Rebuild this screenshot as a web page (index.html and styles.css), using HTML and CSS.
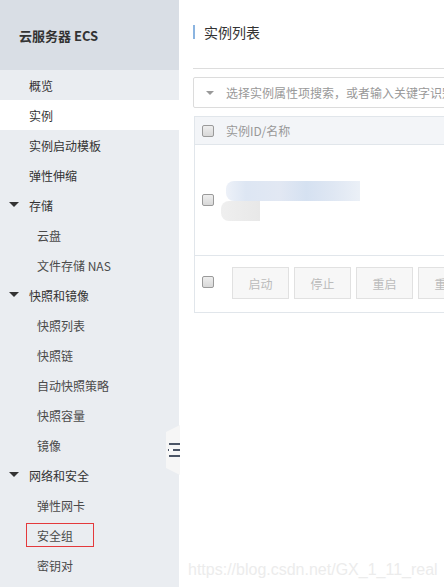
FILE: index.html
```html
<!DOCTYPE html>
<html lang="zh-CN">
<head>
<meta charset="utf-8">
<title>云服务器 ECS</title>
<link rel="stylesheet" href="styles.css">
</head>
<body>
<div class="app">
  <aside class="sidebar">
    <div class="side-head">云服务器 ECS</div>
    <ul class="menu">
      <li class="item">概览</li>
      <li class="item active">实例</li>
      <li class="item">实例启动模板</li>
      <li class="item">弹性伸缩</li>
      <li class="item group"><span class="caret"></span>存储</li>
      <li class="item sub">云盘</li>
      <li class="item sub">文件存储 NAS</li>
      <li class="item group"><span class="caret"></span>快照和镜像</li>
      <li class="item sub">快照列表</li>
      <li class="item sub">快照链</li>
      <li class="item sub">自动快照策略</li>
      <li class="item sub">快照容量</li>
      <li class="item sub">镜像</li>
      <li class="item group"><span class="caret"></span>网络和安全</li>
      <li class="item sub">弹性网卡</li>
      <li class="item sub"><span class="mark">安全组</span></li>
      <li class="item sub">密钥对</li>
    </ul>
    <div class="collapse"><span class="bars"><i></i><i class="mid"></i><i></i></span></div>
  </aside>
  <main class="main">
    <div class="title"><span class="title-text">实例列表</span></div>
    <div class="search">
      <span class="search-caret"></span>
      <span class="search-text">选择实例属性项搜索，或者输入关键字识别搜索</span>
    </div>
    <div class="table">
      <div class="thead">
        <span class="cb"></span>
        <span class="th">实例ID/名称</span>
      </div>
      <div class="trow">
        <span class="cb"></span>
        <div class="blur">
          <span class="blur-a"></span>
          <span class="blur-b"></span>
        </div>
      </div>
      <div class="tfoot">
        <span class="cb"></span>
        <div class="btns">
          <span class="btn">启动</span>
          <span class="btn">停止</span>
          <span class="btn">重启</span>
          <span class="btn">重置</span>
        </div>
      </div>
    </div>
    <div class="watermark">https://blog.csdn.net/GX_1_11_real</div>
  </main>
</div>
</body>
</html>
```

FILE: styles.css
```css
* { box-sizing: border-box; }
html, body {
  margin: 0;
  padding: 0;
  width: 444px;
  height: 587px;
  overflow: hidden;
  background: #fff;
  font-family: "Noto Sans CJK SC", "Noto Sans", sans-serif;
  font-size: 12px;
  color: #333;
}
.app {
  display: flex;
  height: 587px;
}
.sidebar {
  position: relative;
  width: 179px;
  flex: 0 0 179px;
  background: #eaedf1;
}
.side-head {
  height: 70px;
  background: #d9dee5;
  padding-left: 19px;
  display: flex;
  align-items: center;
  font-size: 13px;
  font-weight: bold;
  color: #333;
}
.menu {
  list-style: none;
  margin: 0;
  padding: 0;
}
.item {
  height: 30px;
  display: flex;
  align-items: center;
  padding-left: 29px;
  position: relative;
  color: #333;
}
.item.active { background: #fff; }
.item.sub { padding-left: 37px; color: #4a4a4a; }
.caret {
  position: absolute;
  left: 9px;
  top: 12px;
  width: 0;
  height: 0;
  border-left: 5px solid transparent;
  border-right: 5px solid transparent;
  border-top: 5px solid #333;
}
.mark {
  margin-left: -11px;
  padding: 0 10px;
  height: 24px;
  width: 68px;
  display: flex;
  align-items: center;
  border: 1px solid #e4393c;
}
.collapse {
  position: absolute;
  left: 166px;
  top: 425px;
  width: 14px;
  height: 50px;
  background: #f6f6f6;
  clip-path: polygon(0 14%, 100% 0, 100% 100%, 0 86%);
  display: flex;
  align-items: center;
  justify-content: flex-end;
}
.bars {
  display: flex;
  flex-direction: column;
  gap: 4px;
  width: 11px;
}
.bars i {
  display: block;
  height: 2px;
  background: #4b5566;
}
.bars i.mid {
  margin-left: 4px;
  box-shadow: -4px 0 0 0 #fff, -5px 0 0 0 #4b5566;
  width: 7px;
}
.main {
  flex: 1;
  min-width: 0;
  position: relative;
  overflow: hidden;
  padding-left: 14px;
}
.title {
  height: 69px;
  border-bottom: 1px solid #dddddd;
  padding-top: 24px;
  margin-right: -20px;
}
.title-text {
  display: inline-block;
  border-left: 2px solid #8bb4e0;
  padding-left: 9px;
  line-height: 14px;
  font-size: 14px;
  color: #333;
}
.search {
  margin-top: 8px;
  height: 31px;
  border: 1px solid #dcdcdc;
  border-radius: 2px;
  display: flex;
  align-items: center;
  padding-left: 12px;
  margin-right: -20px;
  white-space: nowrap;
  overflow: hidden;
}
.search-caret {
  width: 0;
  height: 0;
  border-left: 4px solid transparent;
  border-right: 4px solid transparent;
  border-top: 4px solid #999;
  margin-right: 12px;
}
.search-text { color: #999; }
.table {
  margin-top: 8px;
  margin-left: 1px;
  margin-right: -20px;
  border: 1px solid #e1e6eb;
  border-right: none;
}
.thead {
  height: 28px;
  background: #f3f5f8;
  border-bottom: 1px solid #e1e6eb;
  display: flex;
  align-items: center;
  padding-left: 7px;
}
.cb {
  display: inline-block;
  width: 12px;
  height: 12px;
  border: 1px solid #9a9a9a;
  border-radius: 2px;
  background: linear-gradient(#eeeeee, #d8d8d8);
  flex: 0 0 12px;
}
.th {
  margin-left: 12px;
  color: #999;
}
.trow {
  height: 111px;
  border-bottom: 1px solid #e1e6eb;
  display: flex;
  align-items: center;
  padding-left: 7px;
}
.blur {
  margin-left: 7px;
  display: flex;
  flex-direction: column;
  margin-top: 2px;
}
.blur-a {
  margin-left: 5px;
  width: 134px;
  height: 20px;
  border-radius: 8px 0 0 8px;
  background: linear-gradient(90deg, #edf1f8 0%, #dde6f3 15%, #e2e8f3 40%, #d5e1f1 60%, #dfe7f3 80%, #ebf0f7 100%);
}
.blur-b {
  width: 39px;
  height: 20px;
  border-radius: 8px 0 0 8px;
  background: linear-gradient(90deg, #efefef, #e8e8e8);
}
.tfoot {
  height: 56px;
  display: flex;
  align-items: center;
  padding-left: 7px;
  padding-bottom: 4px;
}
.btns {
  display: flex;
  gap: 5px;
  margin-left: 18px;
  margin-top: 2px;
}
.btn {
  width: 57px;
  height: 32px;
  display: flex;
  align-items: center;
  justify-content: center;
  background: #f7f7f7;
  border: 1px solid #e1e1e1;
  color: #bbbbbb;
  flex: 0 0 57px;
}
.watermark {
  position: absolute;
  left: 9px;
  top: 561px;
  font-family: "Liberation Sans", Arial, sans-serif;
  font-size: 16px;
  color: #ececec;
  white-space: nowrap;
}
```
